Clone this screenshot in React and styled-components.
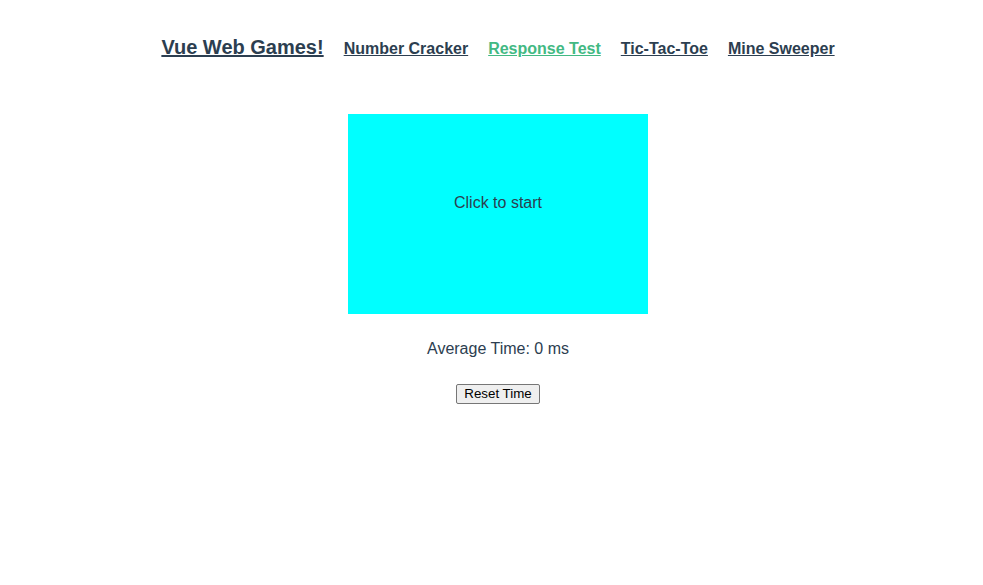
import React from 'react';
import styled, { createGlobalStyle } from 'styled-components';

const GlobalStyle = createGlobalStyle`
  body {
    margin: 0;
    background: #ffffff;
    font-family: "Liberation Sans", Arial, Helvetica, sans-serif;
    -webkit-font-smoothing: antialiased;
  }
`;

const AppWrap = styled.div`
  padding-left: 13px;
  text-align: center;
  color: #2c3e50;
`;

const Nav = styled.nav`
  display: flex;
  justify-content: center;
  align-items: baseline;
  gap: 20px;
  padding-top: 36px;
`;

const NavLink = styled.a`
  font-weight: bold;
  font-size: ${props => (props.$title ? '20px' : '16px')};
  color: ${props => (props.$active ? '#42b983' : '#2c3e50')};
  text-decoration: underline;
  cursor: pointer;
`;

const Game = styled.main`
  display: flex;
  flex-direction: column;
  align-items: center;
  margin-top: 55px;
`;

const Screen = styled.div`
  width: 300px;
  height: 200px;
  box-sizing: border-box;
  padding-top: 80px;
  background: ${props => props.$color};
  font-size: 16px;
  cursor: pointer;
  user-select: none;
`;

const Average = styled.p`
  margin: 26px 0 0;
  font-size: 16px;
  line-height: 18px;
`;

const ResetButton = styled.button`
  margin-top: 26px;
  padding: 1px 7px;
  font-family: "Liberation Sans", Arial, sans-serif;
  font-size: 13.333px;
  line-height: 16px;
  color: #000;
  background: #efefef;
  border: 1px solid #767676;
  border-radius: 2px;
  cursor: pointer;
`;

export default function App() {
  const [times, setTimes] = React.useState([]);
  const avg = times.length ? Math.round(times.reduce((a, b) => a + b, 0) / times.length) : 0;

  return (
    <AppWrap>
      <GlobalStyle />
      <Nav>
        <NavLink $title>Vue Web Games!</NavLink>
        <NavLink>Number Cracker</NavLink>
        <NavLink $active>Response Test</NavLink>
        <NavLink>Tic-Tac-Toe</NavLink>
        <NavLink>Mine Sweeper</NavLink>
      </Nav>
      <Game>
        <Screen $color="#00ffff">Click to start</Screen>
        <Average>Average Time: {avg} ms</Average>
        <ResetButton onClick={() => setTimes([])}>Reset Time</ResetButton>
      </Game>
    </AppWrap>
  );
}
